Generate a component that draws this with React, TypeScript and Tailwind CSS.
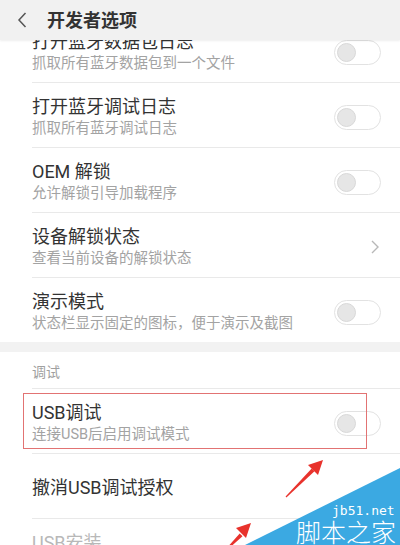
import type { ReactNode } from "react";

const font = { fontFamily: '"Roboto", "Noto Sans CJK SC", sans-serif' };

function Toggle() {
  return (
    <div className="flex h-[25px] w-[47px] shrink-0 items-center rounded-full border-[1.5px] border-[#e2e2e2] bg-white px-[2px]">
      <div className="h-[19px] w-[19px] rounded-full border border-[#d8d8d8] bg-[#e6e6e6]" />
    </div>
  );
}

function Chevron() {
  return (
    <svg width="10" height="16" viewBox="0 0 10 16" className="mr-[1px] shrink-0">
      <path d="M2 2 L8 8 L2 14" fill="none" stroke="#b8b8b8" strokeWidth="1.4" />
    </svg>
  );
}

type RowProps = {
  title: string;
  sub?: string;
  control?: ReactNode;
  titleColor?: string;
};

function Row({ title, sub, control, titleColor = "text-[#333333]" }: RowProps) {
  return (
    <div className="pl-8">
      <div className="flex h-[65px] items-center border-b border-[#e9e9e9] pr-[19px] pt-[4px]">
        <div className="flex flex-1 flex-col">
          <div className={`text-[18px] leading-[24px] ${titleColor}`}>{title}</div>
          {sub && <div className="text-[14.5px] leading-[20px] text-[#a3a3a3]">{sub}</div>}
        </div>
        {control}
      </div>
    </div>
  );
}

export default function App() {
  return (
    <div className="relative h-[545px] w-[400px] overflow-hidden bg-white" style={font}>
      {/* 顶部栏 */}
      <div className="relative z-10 flex h-[40px] items-center bg-[#f1f1f1] shadow-[0_1px_2px_rgba(0,0,0,0.07)]">
        <svg width="12" height="18" viewBox="0 0 12 18" className="ml-[16px]">
          <path d="M9.5 2 L3 9 L9.5 16" fill="none" stroke="#555555" strokeWidth="1.5" />
        </svg>
        <div className="ml-[19px] text-[18px] font-semibold text-[#333333]">开发者选项</div>
      </div>

      <div className="-mt-[22px]">
        <Row title="打开蓝牙数据包日志" sub="抓取所有蓝牙数据包到一个文件" control={<Toggle />} />
        <Row title="打开蓝牙调试日志" sub="抓取所有蓝牙调试日志" control={<Toggle />} />
        <Row title="OEM 解锁" sub="允许解锁引导加载程序" control={<Toggle />} />
        <Row title="设备解锁状态" sub="查看当前设备的解锁状态" control={<Chevron />} />
        <div className="pl-8">
          <div className="flex h-[64px] items-center pr-[19px] pt-[4px]">
            <div className="flex flex-1 flex-col">
              <div className="text-[18px] leading-[24px] text-[#333333]">演示模式</div>
              <div className="text-[14.5px] leading-[20px] text-[#a3a3a3]">状态栏显示固定的图标，便于演示及截图</div>
            </div>
            <Toggle />
          </div>
        </div>

        <div className="h-[10px] bg-[#f2f2f2]" />

        <div className="pl-8">
          <div className="flex h-[37px] items-center border-b border-[#e9e9e9] pt-[4px] text-[14px] text-[#a0a0a0]">
            调试
          </div>
        </div>

        <Row title="USB调试" sub="连接USB后启用调试模式" control={<Toggle />} />
        <Row title="撤消USB调试授权" />
        <Row title="USB安装" sub="允许通过USB安装应用" titleColor="text-[#b8b8b8]" control={<Toggle />} />
      </div>

      {/* 标注框 */}
      <div className="pointer-events-none absolute left-[23px] top-[393px] h-[56px] w-[344px] border-[1.5px] border-[#e27373]" />

      {/* 箭头与水印 */}
      <svg className="pointer-events-none absolute left-0 top-0" width="400" height="545" viewBox="0 0 400 545">
        <polygon points="286.4,497.4 285.6,496.6 311.7,468.5 314.5,471.3" fill="#e8322c" />
        <polygon points="323,460 318,475 308,465" fill="#e8322c" />
        <polygon points="224.4,552.4 223.6,551.6 239.7,533.5 242.5,536.3" fill="#e8322c" />
        <polygon points="251,523 246,538 236,528" fill="#e8322c" />
        <polygon points="245,545 400,468 400,545" fill="#3ba9e2" />
      </svg>
      <div
        className="pointer-events-none absolute left-[332px] top-[503px] text-[13px] leading-[16px] text-white"
        style={{ fontFamily: '"DejaVu Sans Mono", monospace' }}
      >
        jb51.net
      </div>
      <div
        className="pointer-events-none absolute left-[296px] top-[517px] text-[25px] font-light leading-[28px] text-white"
        style={{ fontFamily: '"Noto Sans CJK SC", sans-serif' }}
      >
        脚本之家
      </div>
    </div>
  );
}
